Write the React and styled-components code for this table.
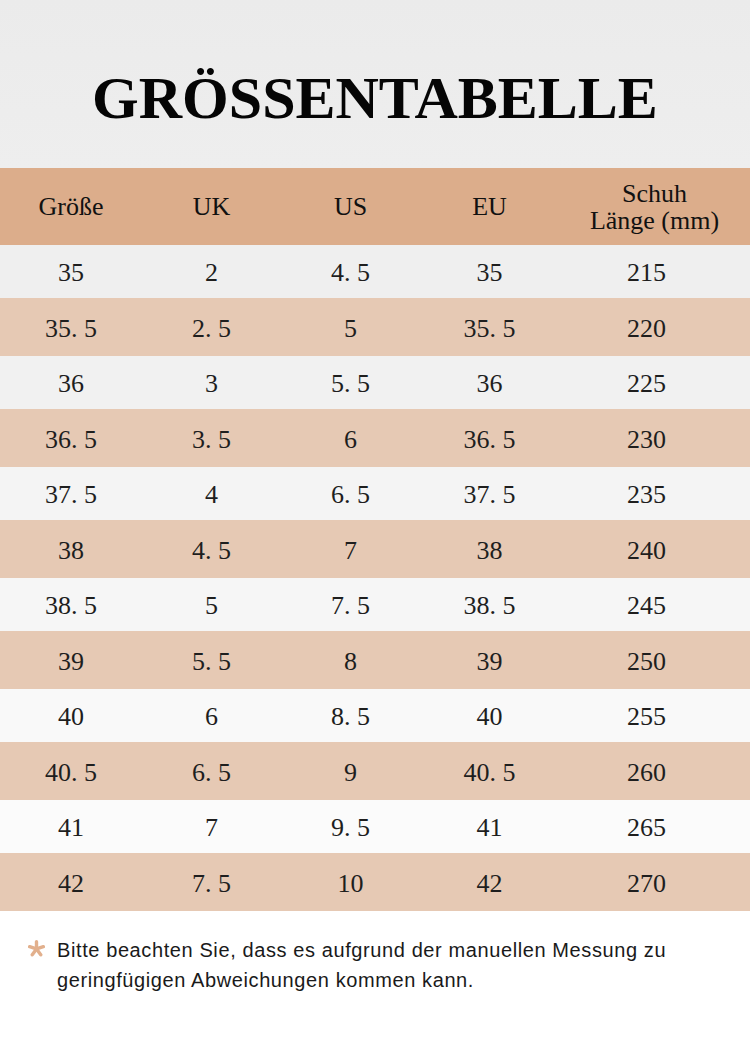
import React from "react";
import styled, { createGlobalStyle } from "styled-components";

const GlobalStyle = createGlobalStyle`
  html, body {
    margin: 0;
    padding: 0;
    background: #ffffff;
  }
  body {
    font-family: "Liberation Serif", "Times New Roman", serif;
    -webkit-font-smoothing: antialiased;
  }
`;

const Page = styled.div`
  width: 750px;
  min-height: 1056px;
  background: #ffffff;
`;

const TitleBar = styled.header`
  height: 168px;
  box-sizing: border-box;
  padding-top: 68px;
  background: linear-gradient(#ebebeb, #eeeeee);
  text-align: center;
`;

const Title = styled.h1`
  margin: 0;
  font-family: "Liberation Serif", "Times New Roman", serif;
  font-weight: 700;
  font-size: 60px;
  line-height: 60px;
  color: #050505;
`;

const Row = styled.div`
  display: grid;
  grid-template-columns: 142px 139px 139px 139px 1fr;
  align-items: center;
  height: ${(p) => p.$height}px;
  background: ${(p) => p.$bg};
`;

const HeadCell = styled.div`
  text-align: center;
  font-size: 26px;
  line-height: 27px;
  color: #111111;
`;

const Cell = styled.div`
  text-align: center;
  font-size: 26px;
  line-height: 30px;
  padding-top: 3px;
  color: #1e1e1e;
  padding-right: ${(p) => (p.$last ? "16px" : "0")};
`;

const Note = styled.div`
  display: flex;
  align-items: flex-start;
  padding: 24px 30px 0 28px;
  font-family: "Liberation Sans", Arial, sans-serif;
  font-size: 20px;
  letter-spacing: 0.6px;
  line-height: 30px;
  color: #1a1a1a;
`;

const Star = styled.svg`
  flex: none;
  width: 17px;
  height: 17px;
  margin: 5px 12px 0 0;
`;

const rows = [
  ["35", "2", "4.5", "35", "215"],
  ["35.5", "2.5", "5", "35.5", "220"],
  ["36", "3", "5.5", "36", "225"],
  ["36.5", "3.5", "6", "36.5", "230"],
  ["37.5", "4", "6.5", "37.5", "235"],
  ["38", "4.5", "7", "38", "240"],
  ["38.5", "5", "7.5", "38.5", "245"],
  ["39", "5.5", "8", "39", "250"],
  ["40", "6", "8.5", "40", "255"],
  ["40.5", "6.5", "9", "40.5", "260"],
  ["41", "7", "9.5", "41", "265"],
  ["42", "7.5", "10", "42", "270"],
];

// light rows brighten toward the bottom of the table
const lightShade = (i) => {
  const v = Math.round(0xef + ((0xfb - 0xef) * i) / 10);
  return `rgb(${v}, ${v}, ${v})`;
};

const fmt = (v) => v.replace(".", ". ");

const StarIcon = () => {
  const spokes = [-90, -18, 54, 126, 198];
  return (
    <Star viewBox="0 0 20 20">
      {spokes.map((a) => {
        const r = (a * Math.PI) / 180;
        return (
          <line
            key={a}
            x1="10"
            y1="10.5"
            x2={10 + Math.cos(r) * 8.5}
            y2={10.5 + Math.sin(r) * 8.5}
            stroke="#e2b08d"
            strokeWidth="4"
            strokeLinecap="round"
          />
        );
      })}
    </Star>
  );
};

export default function App() {
  return (
    <Page>
      <GlobalStyle />
      <TitleBar>
        <Title>GRÖSSENTABELLE</Title>
      </TitleBar>

      <Row $height={77} $bg="#dcad8b">
        <HeadCell>Größe</HeadCell>
        <HeadCell>UK</HeadCell>
        <HeadCell>US</HeadCell>
        <HeadCell>EU</HeadCell>
        <HeadCell>
          Schuh
          <br />
          Länge (mm)
        </HeadCell>
      </Row>

      {rows.map((r, i) => {
        const odd = i % 2 === 1;
        return (
          <Row key={r[0]} $height={odd ? 58 : 53} $bg={odd ? "#e6c9b4" : lightShade(i)}>
            {r.map((v, j) => (
              <Cell key={j} $last={j === 4}>
                {fmt(v)}
              </Cell>
            ))}
          </Row>
        );
      })}

      <Note>
        <StarIcon />
        <span>
          Bitte beachten Sie, dass es aufgrund der manuellen Messung zu geringfügigen
          Abweichungen kommen kann.
        </span>
      </Note>
    </Page>
  );
}
